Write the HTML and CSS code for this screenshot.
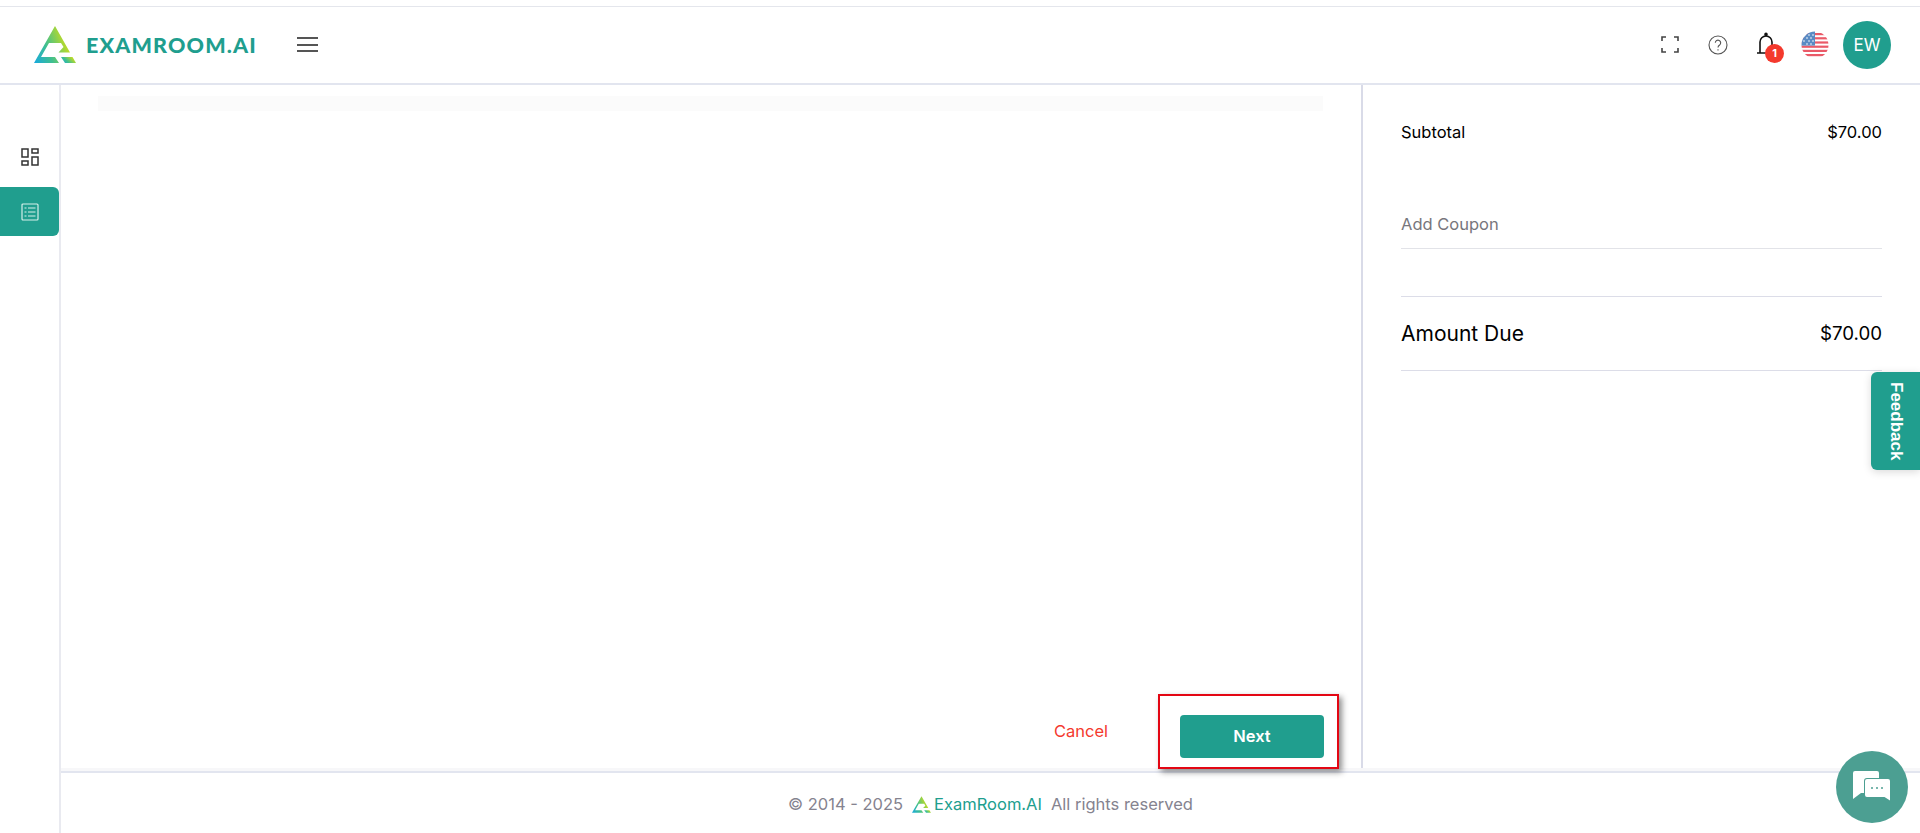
FILE: index.html
```html
<!DOCTYPE html>
<html lang="en">
<head>
<meta charset="utf-8">
<title>ExamRoom.AI</title>
<link rel="stylesheet" href="styles.css">
</head>
<body>
<svg class="defs" width="0" height="0" aria-hidden="true">
  <defs>
    <linearGradient id="lg" x1="0" y1="1" x2="1" y2="0.6">
      <stop offset="0" stop-color="#17a9e0"/>
      <stop offset="0.45" stop-color="#3fbf90"/>
      <stop offset="1" stop-color="#c6dd1e"/>
    </linearGradient>
  </defs>
</svg>
<div class="page">
  <div class="topstrip"></div>
  <header class="header">
    <div class="brand">
      <svg class="logo" viewBox="0 0 42 37"><path fill="url(#lg)" d="M21 0 36 26.500H24.500L29.500 21 27 17H15L7 31H21L25 37H0Z"/><path fill="url(#lg)" d="M27 31H38.500L42 37H31Z"/></svg>
      <span class="wordmark">EXAMROOM.AI</span>
    </div>
    <button class="burger" aria-label="Menu"><span></span><span></span><span></span></button>
    <div class="tools">
      <svg class="ico-full" viewBox="0 0 18 17" fill="none" stroke="#444" stroke-width="1.600"><path d="M1 5V1H5M13 1H17V5M17 12V16H13M5 16H1V12"/></svg>
      <svg class="ico-help" viewBox="0 0 20 20" fill="none" stroke="#555" stroke-width="1.100"><circle cx="10" cy="10" r="9"/><path d="M7.300 7.800a2.700 2.700 0 1 1 4.300 2.200c-1 .7-1.600 1.200-1.600 2.400"/><path d="M10 14.200v1.200"/></svg>
      <div class="bell">
        <svg viewBox="0 0 20 24" fill="none" stroke="#111" stroke-width="1.600"><path d="M1 21H19M4 21V10a6 6 0 0 1 12 0v11"/><circle cx="10" cy="2.400" r="1" fill="#111"/></svg>
        <span class="badge">1</span>
      </div>
      <svg class="flag" viewBox="0 0 28 28">
        <clipPath id="fc"><circle cx="14" cy="14" r="13.500"/></clipPath>
        <g clip-path="url(#fc)">
          <rect width="28" height="28" fill="#fff"/>
          <g fill="#ea5a68"><rect y="2" width="28" height="2.200"/><rect y="6.200" width="28" height="2.200"/><rect y="10.400" width="28" height="2.200"/><rect y="14.600" width="28" height="2.200"/><rect y="18.800" width="28" height="2.200"/><rect y="23" width="28" height="2.200"/></g>
          <rect width="14" height="14.600" fill="#5a8bc4"/>
          <g fill="#fff"><circle cx="4" cy="4" r=".8"/><circle cx="8" cy="4" r=".8"/><circle cx="12" cy="4" r=".8"/><circle cx="6" cy="7" r=".8"/><circle cx="10" cy="7" r=".8"/><circle cx="3" cy="10" r=".8"/><circle cx="8" cy="10" r=".8"/><circle cx="12" cy="10" r=".8"/><circle cx="6" cy="13" r=".8"/><circle cx="10" cy="13" r=".8"/></g>
        </g>
      </svg>
      <div class="avatar">EW</div>
    </div>
  </header>
  <div class="body">
    <nav class="sidebar">
      <div class="nav-item first">
        <svg viewBox="0 0 18 18" fill="none" stroke="#333" stroke-width="1.500"><rect x="1" y="1" width="6" height="8"/><rect x="11" y="1" width="6" height="4"/><rect x="1" y="13" width="6" height="4"/><rect x="11" y="9" width="6" height="8"/></svg>
      </div>
      <div class="nav-item active">
        <svg viewBox="0 0 18 18" fill="none" stroke="#d5efe9" stroke-width="1.200"><rect x="1" y="1" width="16" height="16" rx="1"/><path d="M3.500 5h2M7 5h7.500M3.500 9h2M7 9h7.500M3.500 13h2M7 13h7.500"/></svg>
      </div>
    </nav>
    <div class="content">
      <div class="columns">
        <main class="left">
          <div class="placeholder"></div>
          <div class="actions">
            <a class="cancel">Cancel</a>
            <div class="highlight"><button class="next">Next</button></div>
          </div>
        </main>
        <aside class="summary">
          <div class="row subtotal"><span>Subtotal</span><span>$70.00</span></div>
          <div class="coupon">Add Coupon</div>
          <div class="row due"><span>Amount Due</span><span class="due-value">$70.00</span></div>
        </aside>
      </div>
      <footer class="footer">
        <span>© 2014 - 2025</span>
        <span class="foot-brand">
          <svg viewBox="0 0 42 37"><path fill="url(#lg)" d="M21 0 36 26.500H24.500L29.500 21 27 17H15L7 31H21L25 37H0Z"/><path fill="url(#lg)" d="M27 31H38.500L42 37H31Z"/></svg>
          <span>ExamRoom.AI</span>
        </span>
        <span>All rights reserved</span>
      </footer>
    </div>
  </div>
  <div class="feedback"><span>Feedback</span></div>
  <div class="chat">
    <svg viewBox="0 0 38 32"><path fill="#fff" d="M2 0H24a2 2 0 0 1 2 2V22H8L0 28V2A2 2 0 0 1 2 0Z"/><path fill="#4c9f92" d="M14 7H35a3 3 0 0 1 3 3V32L31 27H14a3 3 0 0 1-3-3V10a3 3 0 0 1 3-3Z"/><path fill="#fff" d="M14 8H35a2 2 0 0 1 2 2V29.500L31.500 26H14a2 2 0 0 1-2-2V10a2 2 0 0 1 2-2Z"/><g fill="#4c9f92"><circle cx="19" cy="17" r="1"/><circle cx="24" cy="17" r="1"/><circle cx="29" cy="17" r="1"/></g></svg>
  </div>
</div>
</body>
</html>
```
FILE: styles.css
```css
* { box-sizing: border-box; }
html, body { margin: 0; height: 100%; overflow: hidden; }
body { font-family: Inter, "Liberation Sans", sans-serif; background: #fff; color: #000; }
.defs { position: absolute; }
.page { position: relative; height: 833px; display: flex; flex-direction: column; }
.topstrip { height: 7px; border-bottom: 1px solid #e4e6ec; flex: none; }
.header { height: 78px; flex: none; border-bottom: 2px solid #e2e5ef; display: flex; align-items: center; padding: 0 34px 1px; }
.brand { display: flex; align-items: center; gap: 10px; width: 263px; }
.logo { width: 42px; height: 37px; }
.wordmark { font-family: Lato, sans-serif; font-weight: 900; font-size: 21.500px; letter-spacing: 1.150px; color: #209e8e; line-height: 1; position: relative; top: 1px; }
.burger { width: 21px; height: 15px; padding: 0; border: 0; background: none; display: flex; flex-direction: column; justify-content: space-between; }
.burger span { display: block; height: 2px; background: #555; }
.tools { margin-left: auto; display: flex; align-items: center; margin-right: -5px; }
.ico-full { width: 18px; height: 17px; margin-right: 29px; }
.ico-help { width: 20px; height: 20px; margin-right: 28px; }
.bell { position: relative; width: 20px; height: 24px; margin-right: 25px; margin-top: -2px; }
.bell svg { width: 20px; height: 24px; display: block; }
.badge { position: absolute; left: 9px; top: 12px; width: 19px; height: 19px; border-radius: 50%; background: #f4392d; color: #fff; font-size: 11px; font-weight: 700; display: flex; align-items: center; justify-content: center; }
.flag { width: 28px; height: 28px; margin-right: 14px; }
.avatar { width: 48px; height: 48px; border-radius: 50%; background: #209e8e; color: #fff; font-size: 17px; display: flex; align-items: center; justify-content: center; }
.body { flex: 1; display: flex; min-height: 0; }
.sidebar { width: 61px; flex: none; border-right: 2px solid #e9eaf0; padding-top: 52px; display: flex; flex-direction: column; gap: 1px; }
.nav-item { height: 49px; display: flex; align-items: center; justify-content: center; }
.nav-item.first { padding-bottom: 9px; }
.nav-item svg { width: 18px; height: 18px; }
.nav-item.active { background: #209e8e; border-radius: 0 6px 6px 0; }
.content { flex: 1; display: flex; flex-direction: column; min-width: 0; }
.columns { flex: 1; display: flex; min-height: 0; }
.left { width: 1302px; flex: none; border-right: 2px solid #d9dbe8; padding: 11px 38px 0 37px; display: flex; flex-direction: column; justify-content: space-between; }
.placeholder { height: 15px; background: #fbfbfb; }
.actions { display: flex; align-items: center; justify-content: flex-end; margin-right: -16px; }
.cancel { color: #f4392d; font-size: 16.500px; margin-right: 50px; }
.highlight { width: 181px; height: 75px; margin-bottom: -1px; border: 2px solid #e30613; box-shadow: 3px 3px 6px rgba(0,0,0,.45); display: flex; align-items: center; justify-content: center; padding: 9px 0 0 7px; position: relative; z-index: 1; background: #fff; }
.next { width: 144px; height: 43px; background: #209e8e; color: #fff; border: 0; border-radius: 4px; font: 600 16.500px Inter, sans-serif; }
.summary { width: 555px; flex: none; padding: 35px 0 0 38px; }
.row { display: flex; justify-content: space-between; width: 481px; }
.subtotal { font-size: 16.500px; line-height: 24px; }
.coupon { width: 481px; margin-top: 68px; height: 37px; border-bottom: 1px solid #e2e3e8; font-size: 16.500px; line-height: 24px; color: #77767c; }
.due { font-size: 21px; line-height: 28px; margin-top: 47px; border-top: 1px solid #dcdde8; border-bottom: 1px solid #dcdde8; height: 75px; align-items: center; }
.due-value { font-size: 18.700px; }
.footer { height: 65px; flex: none; border-top: 3px solid #f7f7f9; box-shadow: inset 0 2px #e2e5ef; display: flex; align-items: center; justify-content: center; gap: 9px; font-size: 16.500px; color: #85838f; padding-top: 4px; }
.foot-brand { display: flex; align-items: center; gap: 3px; color: #209e8e; }
.foot-brand svg { width: 19px; height: 17px; }
.feedback { position: absolute; left: 1871px; top: 372px; width: 49px; height: 98px; background: #209e8e; border-radius: 6px 0 0 6px; box-shadow: 0 2px 8px rgba(0,0,0,.15); color: #fff; display: flex; align-items: center; justify-content: center; }
.feedback span { writing-mode: vertical-rl; font: 700 17px "Liberation Sans", sans-serif; }
.chat { position: absolute; left: 1836px; top: 751px; width: 72px; height: 72px; border-radius: 50%; background: #4c9f92; display: flex; align-items: center; justify-content: center; }
.chat svg { width: 38px; height: 32px; }
```
